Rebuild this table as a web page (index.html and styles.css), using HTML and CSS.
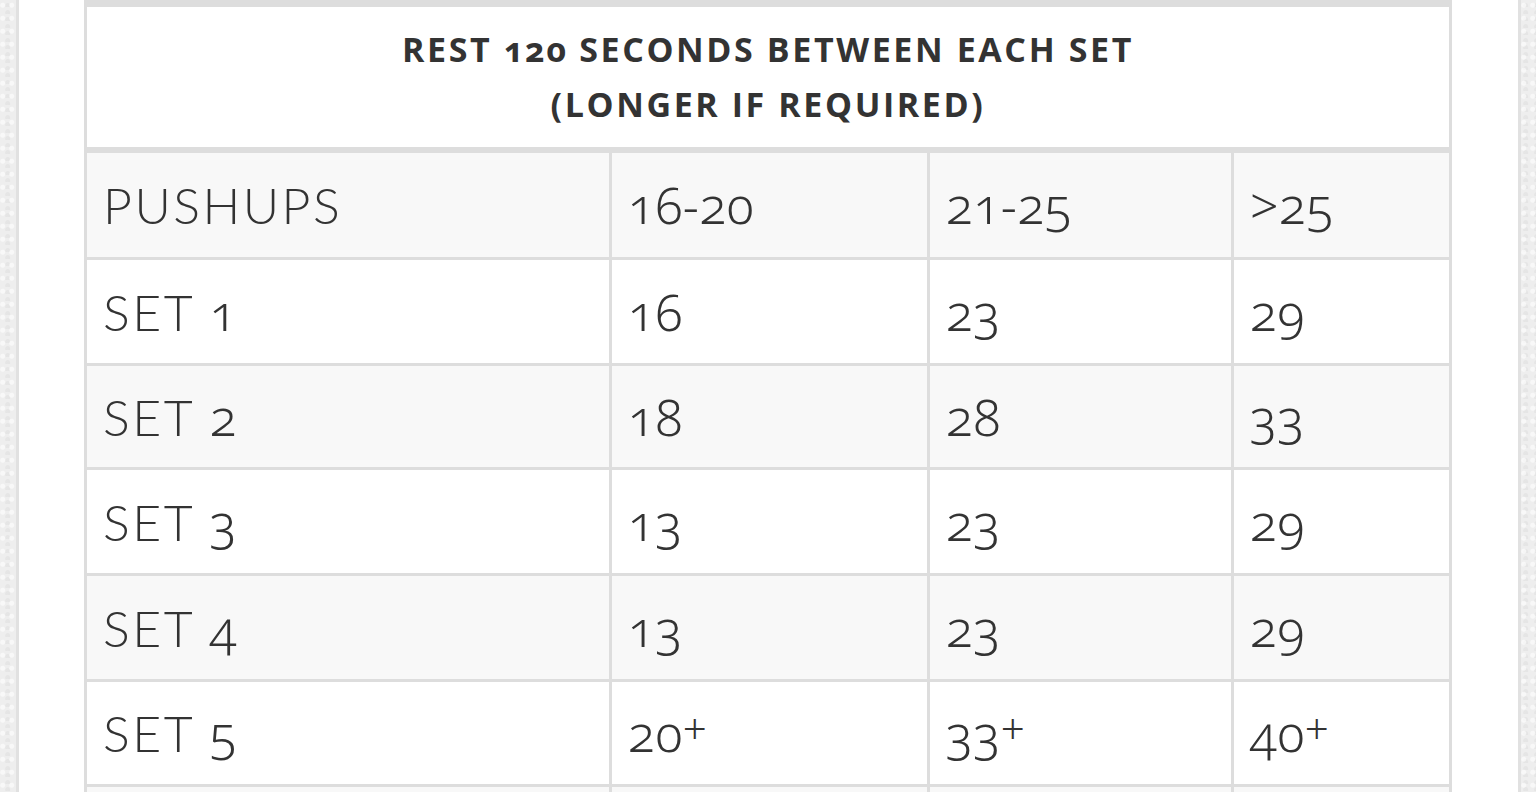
FILE: index.html
```html
<!DOCTYPE html>
<html lang="en">
<head>
<meta charset="utf-8">
<title>Pushups program</title>
<link rel="stylesheet" href="styles.css">
</head>
<body>
<div class="panel">
  <div class="chart">
    <div class="title"><p class="title-text">REST <span class="fig">120</span> SECONDS BETWEEN EACH SET<br>(LONGER IF REQUIRED)</p></div>

    <div class="cell alt">PUSHUPS</div>
    <div class="cell alt"><span class="fig">16-20</span></div>
    <div class="cell alt"><span class="fig">21-25</span></div>
    <div class="cell alt"><span class="fig">&gt;25</span></div>

    <div class="cell">SET <span class="fig">1</span></div>
    <div class="cell"><span class="fig">16</span></div>
    <div class="cell"><span class="fig">23</span></div>
    <div class="cell"><span class="fig">29</span></div>

    <div class="cell alt">SET <span class="fig">2</span></div>
    <div class="cell alt"><span class="fig">18</span></div>
    <div class="cell alt"><span class="fig">28</span></div>
    <div class="cell alt"><span class="fig">33</span></div>

    <div class="cell">SET <span class="fig">3</span></div>
    <div class="cell"><span class="fig">13</span></div>
    <div class="cell"><span class="fig">23</span></div>
    <div class="cell"><span class="fig">29</span></div>

    <div class="cell alt">SET <span class="fig">4</span></div>
    <div class="cell alt"><span class="fig">13</span></div>
    <div class="cell alt"><span class="fig">23</span></div>
    <div class="cell alt"><span class="fig">29</span></div>

    <div class="cell">SET <span class="fig">5</span></div>
    <div class="cell"><span class="fig">20</span><span class="plus">+</span></div>
    <div class="cell"><span class="fig">33</span><span class="plus">+</span></div>
    <div class="cell"><span class="fig">40</span><span class="plus">+</span></div>

    <div class="cell alt"></div>
    <div class="cell alt"></div>
    <div class="cell alt"></div>
    <div class="cell alt"></div>
  </div>
</div>
</body>
</html>
```

FILE: styles.css
```css
html, body {
  margin: 0;
  padding: 0;
  height: 100%;
  overflow: hidden;
}

body {
  background-color: #eeeeee;
  background-image:
    radial-gradient(circle at 30% 40%, rgba(255,255,255,0.6) 0 2px, transparent 3px),
    radial-gradient(circle at 70% 80%, rgba(220,220,220,0.5) 0 2px, transparent 3px);
  background-size: 9px 13px, 11px 7px;
  font-family: "Lato", "Liberation Sans", sans-serif;
  color: #333333;
}

.panel {
  box-sizing: border-box;
  width: 1505px;
  min-height: 100%;
  margin-left: 16px;
  background: #ffffff;
  border-left: 3px solid #e1e1e1;
  border-right: 3px solid #e1e1e1;
  padding: 0 66px 0 65px;
}

.chart {
  display: grid;
  grid-template-columns: 522px 315px 301px 215px;
  grid-template-rows: 143px 104px 103px 101px 103px 103px 102px 80px;
  gap: 3px;
  padding: 7px 3px 3px 3px;
  background: #dddddd;
}

.title {
  grid-column: 1 / -1;
  margin-bottom: 3px;
  background: #ffffff;
  display: flex;
  align-items: center;
  justify-content: center;
}

.title-text {
  margin: 0;
  text-align: center;
  font-family: "Open Sans", "Lato", sans-serif;
  font-weight: 700;
  font-size: 34px;
  line-height: 55px;
  letter-spacing: 2.6px;
}

.cell {
  background: #ffffff;
  display: flex;
  align-items: center;
  padding-left: 16px;
  font-weight: 300;
  font-size: 50px;
  line-height: 1;
  letter-spacing: 2.5px;
  white-space: pre;
}

.cell.alt {
  background: #f8f8f8;
}

.fig {
  font-family: "Noto Sans", "Lato", sans-serif;
  font-variant-numeric: oldstyle-nums;
  font-weight: 300;
  letter-spacing: 0.5px;
}

.title .fig {
  font-weight: 700;
  letter-spacing: 1.5px;
}

.plus {
  font-family: "Noto Sans", sans-serif;
  font-weight: 300;
  font-size: 42px;
  position: relative;
  top: -5px;
  letter-spacing: 0;
}
```
